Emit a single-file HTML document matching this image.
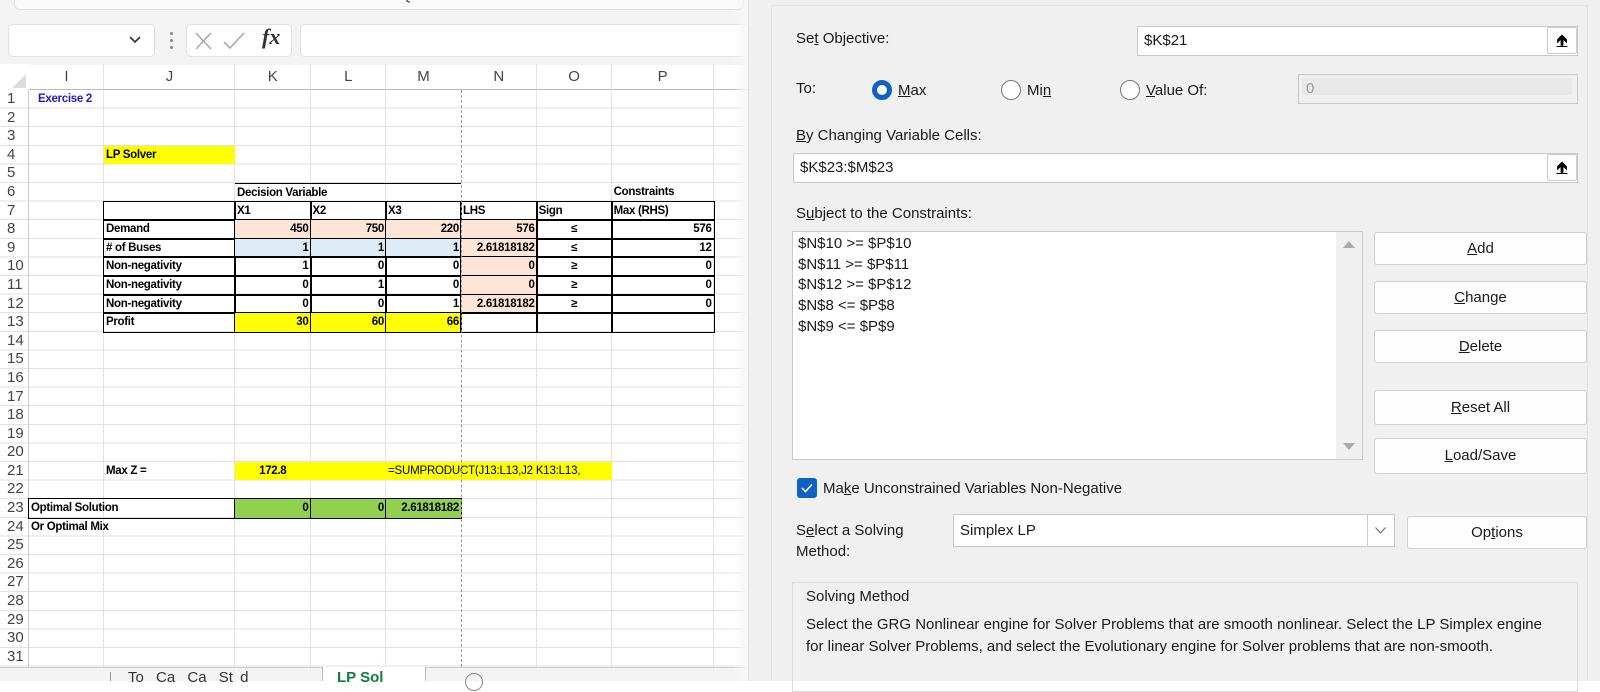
<!DOCTYPE html>
<html><head><meta charset="utf-8">
<style>
*{box-sizing:border-box;margin:0;padding:0}
body{width:1600px;height:681px;overflow:hidden;background:#fff;position:relative;font-family:"Liberation Sans",sans-serif}
.abs{position:absolute}
#sheet{position:absolute;left:0;top:64px;display:grid;grid-template-columns:29px 75px 131px 75.5px 75.5px 75px 75.6px 75px 102px 60px;grid-template-rows:26px repeat(32,18.6px);z-index:1;background:transparent}
.c{font-size:11.5px;font-weight:bold;line-height:18.6px;white-space:nowrap;padding:0 2px;color:#000;overflow:visible;position:relative;letter-spacing:-0.3px}
.r{text-align:right}
.ctr{text-align:center}
.b{outline:1px solid #000;outline-offset:-0.5px;z-index:2}
.pe{background:#fce4d6}
.bl{background:#ddebf7}
.ye{background:#ffff00}
.gr{background:#92d050}
.rh{font-size:15px;color:#444;line-height:18.6px;padding-left:7px;font-weight:normal}
.ch{font-size:15px;color:#444;text-align:center;line-height:26px}
.dlg{font-size:15px;color:#1a1a1a}
.inp{position:absolute;background:#fff;border:1px solid #c8c8c8}
.btn{position:absolute;background:#fdfdfd;border:1px solid #d0d0d0;border-radius:3px;text-align:center;font-size:15px;color:#1a1a1a}
.up{position:absolute;width:30px;height:27px;background:#fdfdfd;border:1px solid #ccc;border-radius:2px;text-align:center;font-size:15px;font-weight:bold;line-height:25px}
.rad{position:absolute;width:20px;height:20px;border-radius:50%;border:1px solid #777;background:#fff}
u{text-decoration:underline}
</style></head><body>
<div class="abs" style="left:0;top:0;width:748px;height:65px;background:#f3f3f3"></div>
<div class="abs" style="left:14px;top:-12px;width:730px;height:22px;border:1px solid #ddd;border-radius:6px;background:#fafafa;overflow:hidden"><div style="position:absolute;left:20px;top:-2px;font-size:14px;color:#333;white-space:nowrap">Get &amp; Transform Data<span style="display:inline-block;width:230px"></span>Queries &amp; Connections<span style="display:inline-block;width:240px"></span>Data Types</div></div>
<div class="abs" style="left:8px;top:24px;width:147px;height:33px;background:#fff;border:1px solid #e0e0e0;border-radius:5px"></div>
<svg class="abs" style="left:128px;top:34px" width="14" height="12"><path d="M2 3 L7 8 L12 3" stroke="#333" stroke-width="1.6" fill="none"/></svg>
<div class="abs" style="left:170px;top:32px;width:3px;height:3px;background:#888;border-radius:2px"></div>
<div class="abs" style="left:170px;top:39px;width:3px;height:3px;background:#888;border-radius:2px"></div>
<div class="abs" style="left:170px;top:46px;width:3px;height:3px;background:#888;border-radius:2px"></div>
<div class="abs" style="left:186px;top:24px;width:106px;height:33px;background:#fff;border:1px solid #e0e0e0;border-radius:5px"></div>
<svg class="abs" style="left:194px;top:30px" width="60" height="22"><path d="M2 3 L17 19 M17 3 L2 19" stroke="#aaa" stroke-width="1.6"/><path d="M30 12 L36 18 L50 3" stroke="#aaa" stroke-width="1.6" fill="none"/></svg>
<div class="abs" style="left:262px;top:24px;font:italic bold 22px 'Liberation Serif',serif;color:#333">fx</div>
<div class="abs" style="left:300px;top:24px;width:460px;height:33px;background:#fff;border:1px solid #e0e0e0;border-radius:5px"></div>

<div id="sheet">
<div style="grid-area:1/1;background:#fff;position:relative"><svg width="29" height="26" class="abs" style="left:0;top:0"><path d="M26 10 L26 24 L12 24 Z" fill="#ddd"/></svg></div>
<div class="ch" style="grid-area:1/2">I</div><div class="ch" style="grid-area:1/3">J</div><div class="ch" style="grid-area:1/4">K</div><div class="ch" style="grid-area:1/5">L</div><div class="ch" style="grid-area:1/6">M</div><div class="ch" style="grid-area:1/7">N</div><div class="ch" style="grid-area:1/8">O</div><div class="ch" style="grid-area:1/9">P</div>
<div class="rh" style="grid-area:2/1">1</div><div class="rh" style="grid-area:3/1">2</div><div class="rh" style="grid-area:4/1">3</div><div class="rh" style="grid-area:5/1">4</div><div class="rh" style="grid-area:6/1">5</div><div class="rh" style="grid-area:7/1">6</div><div class="rh" style="grid-area:8/1">7</div><div class="rh" style="grid-area:9/1">8</div><div class="rh" style="grid-area:10/1">9</div><div class="rh" style="grid-area:11/1">10</div><div class="rh" style="grid-area:12/1">11</div><div class="rh" style="grid-area:13/1">12</div><div class="rh" style="grid-area:14/1">13</div><div class="rh" style="grid-area:15/1">14</div><div class="rh" style="grid-area:16/1">15</div><div class="rh" style="grid-area:17/1">16</div><div class="rh" style="grid-area:18/1">17</div><div class="rh" style="grid-area:19/1">18</div><div class="rh" style="grid-area:20/1">19</div><div class="rh" style="grid-area:21/1">20</div><div class="rh" style="grid-area:22/1">21</div><div class="rh" style="grid-area:23/1">22</div><div class="rh" style="grid-area:24/1">23</div><div class="rh" style="grid-area:25/1">24</div><div class="rh" style="grid-area:26/1">25</div><div class="rh" style="grid-area:27/1">26</div><div class="rh" style="grid-area:28/1">27</div><div class="rh" style="grid-area:29/1">28</div><div class="rh" style="grid-area:30/1">29</div><div class="rh" style="grid-area:31/1">30</div><div class="rh" style="grid-area:32/1">31</div>

<div class="c" style="grid-area:2/2;color:#1f1fbf;padding-left:9px">Exercise 2</div>
<div class="c ye" style="grid-area:5/3">LP Solver</div>
<div class="c" style="grid-area:7/4 / 8/7;border-top:1px solid #000;z-index:2">Decision Variable</div>
<div class="c" style="grid-area:7/9">Constraints</div>
<div class="c b" style="grid-area:8/3"></div><div class="c b" style="grid-area:8/4">X1</div><div class="c b" style="grid-area:8/5">X2</div><div class="c b" style="grid-area:8/6">X3</div><div class="c b" style="grid-area:8/7">LHS</div><div class="c b" style="grid-area:8/8">Sign</div><div class="c b" style="grid-area:8/9">Max (RHS)</div>
<div class="c b" style="grid-area:9/3">Demand</div><div class="c b r pe" style="grid-area:9/4">450</div><div class="c b r pe" style="grid-area:9/5">750</div><div class="c b r pe" style="grid-area:9/6">220</div><div class="c b r pe" style="grid-area:9/7">576</div><div class="c b ctr" style="grid-area:9/8">≤</div><div class="c b r" style="grid-area:9/9">576</div>
<div class="c b" style="grid-area:10/3"># of Buses</div><div class="c b r bl" style="grid-area:10/4">1</div><div class="c b r bl" style="grid-area:10/5">1</div><div class="c b r bl" style="grid-area:10/6">1</div><div class="c b r pe" style="grid-area:10/7">2.61818182</div><div class="c b ctr" style="grid-area:10/8">≤</div><div class="c b r" style="grid-area:10/9">12</div>
<div class="c b" style="grid-area:11/3">Non-negativity</div><div class="c b r" style="grid-area:11/4">1</div><div class="c b r" style="grid-area:11/5">0</div><div class="c b r" style="grid-area:11/6">0</div><div class="c b r pe" style="grid-area:11/7">0</div><div class="c b ctr" style="grid-area:11/8">≥</div><div class="c b r" style="grid-area:11/9">0</div>
<div class="c b" style="grid-area:12/3">Non-negativity</div><div class="c b r" style="grid-area:12/4">0</div><div class="c b r" style="grid-area:12/5">1</div><div class="c b r" style="grid-area:12/6">0</div><div class="c b r pe" style="grid-area:12/7">0</div><div class="c b ctr" style="grid-area:12/8">≥</div><div class="c b r" style="grid-area:12/9">0</div>
<div class="c b" style="grid-area:13/3">Non-negativity</div><div class="c b r" style="grid-area:13/4">0</div><div class="c b r" style="grid-area:13/5">0</div><div class="c b r" style="grid-area:13/6">1</div><div class="c b r pe" style="grid-area:13/7">2.61818182</div><div class="c b ctr" style="grid-area:13/8">≥</div><div class="c b r" style="grid-area:13/9">0</div>
<div class="c b" style="grid-area:14/3">Profit</div><div class="c b r ye" style="grid-area:14/4">30</div><div class="c b r ye" style="grid-area:14/5">60</div><div class="c b r ye" style="grid-area:14/6">66</div><div class="c b" style="grid-area:14/7"></div><div class="c b" style="grid-area:14/8"></div><div class="c b" style="grid-area:14/9"></div>

<div class="c" style="grid-area:22/3">Max Z =</div>
<div class="c ye ctr" style="grid-area:22/4">172.8</div>
<div class="c ye" style="grid-area:22/5"></div>
<div class="c ye" style="grid-area:22/6 / 23/9;font-weight:normal;letter-spacing:-0.2px">=SUMPRODUCT(J13:L13,J2 K13:L13,</div>
<div class="c b" style="grid-area:24/2 / 25/4">Optimal Solution</div>
<div class="c b r gr" style="grid-area:24/4">0</div><div class="c b r gr" style="grid-area:24/5">0</div><div class="c b r gr" style="grid-area:24/6">2.61818182</div>
<div class="c" style="grid-area:25/2 / 26/4">Or Optimal Mix</div>
</div>
<div class="abs" style="left:0;top:90px;width:748px;height:577px;z-index:0;pointer-events:none;background:repeating-linear-gradient(to bottom,transparent 0,transparent 17.6px,#e2e2e2 17.6px,#e2e2e2 18.6px)"></div>
<div class="abs" style="left:0;top:89px;width:748px;height:1px;background:#bbb"></div>
<div class="abs" style="left:28px;top:64px;width:1px;height:603px;background:#ccc"></div>
<div class="abs" style="left:103px;top:64px;width:1px;height:603px;background:#e2e2e2"></div>
<div class="abs" style="left:234px;top:64px;width:1px;height:603px;background:#e2e2e2"></div>
<div class="abs" style="left:310px;top:64px;width:1px;height:603px;background:#e2e2e2"></div>
<div class="abs" style="left:385px;top:64px;width:1px;height:603px;background:#e2e2e2"></div>
<div class="abs" style="left:536px;top:64px;width:1px;height:603px;background:#e2e2e2"></div>
<div class="abs" style="left:611px;top:64px;width:1px;height:603px;background:#e2e2e2"></div>
<div class="abs" style="left:713px;top:64px;width:1px;height:603px;background:#e2e2e2"></div>
<div class="abs" style="left:461px;top:90px;width:0;height:577px;border-left:1px dashed #999;z-index:3"></div>
<div class="abs" style="left:0;top:667px;width:748px;height:14px;background:#f3f3f3;border-top:1px solid #ccc"></div>
<div class="abs" style="left:110px;top:672px;width:1px;height:9px;background:#999"></div>
<div class="abs" style="left:128px;top:670px;font-size:15px;color:#333;line-height:15px">To<span style="letter-spacing:8px"> </span>Ca<span style="letter-spacing:8px"> </span>Ca<span style="letter-spacing:8px"> </span>St<span style="letter-spacing:3px"> </span>d</div>
<div class="abs" style="left:322px;top:667px;width:104px;height:14px;background:#fff;border-left:1px solid #bbb;border-right:1px solid #bbb"></div>
<div class="abs" style="left:337px;top:670px;font-size:15px;font-weight:bold;color:#107c41;line-height:15px">LP Sol</div>
<div class="abs" style="left:465px;top:673px;width:18px;height:18px;border-radius:50%;border:1px solid #888"></div>

<div class="abs" style="left:733px;top:0;width:15px;height:681px;background:linear-gradient(to right,rgba(255,255,255,0),#f7f7f7)"></div>
<div class="abs dlg" style="left:748px;top:0;width:852px;height:681px;background:#f0f0f0;border-left:1px solid #ddd"></div>
<div class="abs" style="left:771px;top:5px;width:817px;height:676px;border-left:1px solid #e3e3e3;border-top:1px solid #e3e3e3;border-right:1px solid #e3e3e3"></div>
<div class="abs dlg" style="left:796px;top:30px">Se<u>t</u> Objective:</div>
<div class="inp" style="left:1137px;top:26px;width:441px;height:30px"><span class="dlg" style="position:absolute;left:6px;top:5px">$K$21</span></div>
<div class="up" style="left:1547px;top:27px"><span style="text-decoration:underline">&#129145;</span></div>
<div class="abs dlg" style="left:796px;top:80px">To:</div>
<div class="rad" style="left:872px;top:80px;border:5px solid #0f62c1"></div><div class="abs dlg" style="left:898px;top:82px"><u>M</u>ax</div>
<div class="rad" style="left:1001px;top:80px"></div><div class="abs dlg" style="left:1027px;top:82px">Mi<u>n</u></div>
<div class="rad" style="left:1120px;top:80px"></div><div class="abs dlg" style="left:1146px;top:82px"><u>V</u>alue Of:</div>
<div class="inp" style="left:1298px;top:74px;width:280px;height:30px;background:#f0f0f0;border-color:#c8c8c8"><div style="position:absolute;left:3px;top:3px;right:5px;bottom:8px;background:#e8e8e8"></div><span style="position:absolute;left:7px;top:5px;font-size:15px;color:#999">0</span></div>
<div class="abs dlg" style="left:796px;top:127px"><u>B</u>y Changing Variable Cells:</div>
<div class="inp" style="left:793px;top:153px;width:785px;height:30px"><span class="dlg" style="position:absolute;left:6px;top:5px">$K$23:$M$23</span></div>
<div class="up" style="left:1547px;top:154px"><span style="text-decoration:underline">&#129145;</span></div>
<div class="abs dlg" style="left:796px;top:205px">S<u>u</u>bject to the Constraints:</div>
<div class="inp" style="left:792px;top:231px;width:571px;height:229px">
<div class="dlg" style="position:absolute;left:5px;top:2px;line-height:20.7px">$N$10 &gt;= $P$10<br>$N$11 &gt;= $P$11<br>$N$12 &gt;= $P$12<br>$N$8 &lt;= $P$8<br>$N$9 &lt;= $P$9</div>
<div style="position:absolute;right:0;top:0;width:26px;height:227px;background:#f0f0f0"></div>
<svg style="position:absolute;right:7px;top:8px" width="12" height="8"><path d="M0 8 L6 1 L12 8Z" fill="#aaa"/></svg>
<svg style="position:absolute;right:7px;bottom:8px" width="12" height="8"><path d="M0 0 L6 7 L12 0Z" fill="#aaa"/></svg>
</div>
<div class="btn" style="left:1374px;top:232px;width:213px;height:33px;line-height:31px"><u>A</u>dd</div>
<div class="btn" style="left:1374px;top:281px;width:213px;height:33px;line-height:31px"><u>C</u>hange</div>
<div class="btn" style="left:1374px;top:330px;width:213px;height:33px;line-height:31px"><u>D</u>elete</div>
<div class="btn" style="left:1374px;top:390px;width:213px;height:35px;line-height:33px"><u>R</u>eset All</div>
<div class="btn" style="left:1374px;top:438px;width:213px;height:36px;line-height:34px"><u>L</u>oad/Save</div>
<div class="abs" style="left:797px;top:478px;width:20px;height:20px;background:#0f62c1;border-radius:3px"><svg width="20" height="20"><path d="M5 10 L8.5 13.5 L15 6.5" stroke="#fff" stroke-width="1.5" fill="none"/></svg></div>
<div class="abs dlg" style="left:823px;top:480px">Ma<u>k</u>e Unconstrained Variables Non-Negative</div>
<div class="abs dlg" style="left:796px;top:520px;line-height:21px">S<u>e</u>lect a Solving<br>Method:</div>
<div class="inp" style="left:953px;top:514px;width:442px;height:33px"><span class="dlg" style="position:absolute;left:6px;top:7px">Simplex LP</span>
<div style="position:absolute;right:0;top:0;width:27px;height:31px;border-left:1px solid #ccc;background:#fff"></div>
<svg style="position:absolute;right:8px;top:12px" width="11" height="7"><path d="M0.5 0.5 L5.5 6 L10.5 0.5" stroke="#666" fill="none"/></svg></div>
<div class="btn" style="left:1407px;top:516px;width:180px;height:33px;line-height:31px">Op<u>t</u>ions</div>
<div class="abs" style="left:792px;top:582px;width:786px;height:110px;border:1px solid #dcdcdc"></div>
<div class="abs dlg" style="left:806px;top:588px">Solving Method</div>
<div class="abs dlg" style="left:806px;top:614px;line-height:22px;width:770px">Select the GRG Nonlinear engine for Solver Problems that are smooth nonlinear. Select the LP Simplex engine<br>for linear Solver Problems, and select the Evolutionary engine for Solver problems that are non-smooth.</div>
</body></html>
